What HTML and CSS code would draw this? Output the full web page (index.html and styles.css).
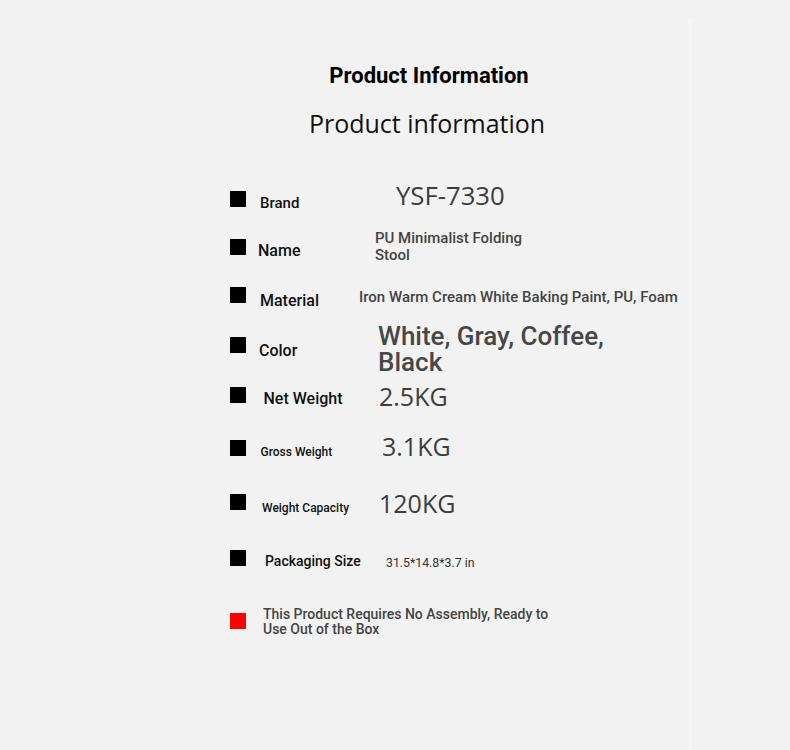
FILE: index.html
```html
<!DOCTYPE html>
<html lang="en">
<head>
<meta charset="utf-8">
<title>Product Information</title>
<link rel="stylesheet" href="styles.css">
</head>
<body>
<main class="page">
  <header class="header">
    <h1 class="title">Product Information</h1>
    <h2 class="subtitle">Product information</h2>
  </header>
  <ul class="specs">
    <li class="row row-brand">
      <span class="sq"></span>
      <span class="label">Brand</span>
      <span class="value big">YSF-7330</span>
    </li>
    <li class="row row-name">
      <span class="sq"></span>
      <span class="label">Name</span>
      <span class="value med">PU Minimalist Folding Stool</span>
    </li>
    <li class="row row-material">
      <span class="sq"></span>
      <span class="label">Material</span>
      <span class="value small">Iron Warm Cream White Baking Paint, PU, Foam</span>
    </li>
    <li class="row row-color">
      <span class="sq"></span>
      <span class="label">Color</span>
      <span class="value huge">White, Gray, Coffee, Black</span>
    </li>
    <li class="row row-net">
      <span class="sq"></span>
      <span class="label">Net Weight</span>
      <span class="value big">2.5KG</span>
    </li>
    <li class="row row-gross">
      <span class="sq"></span>
      <span class="label tiny">Gross Weight</span>
      <span class="value big">3.1KG</span>
    </li>
    <li class="row row-cap">
      <span class="sq"></span>
      <span class="label tiny">Weight Capacity</span>
      <span class="value big">120KG</span>
    </li>
    <li class="row row-pack">
      <span class="sq"></span>
      <span class="label">Packaging Size</span>
      <span class="value mini">31.5*14.8*3.7 in</span>
    </li>
    <li class="row row-note">
      <span class="sq sq-red"></span>
      <span class="note">This Product Requires No Assembly, Ready to Use Out of the Box</span>
    </li>
  </ul>
</main>
</body>
</html>
```

FILE: styles.css
```css
* { box-sizing: border-box; }

html, body {
  margin: 0;
  padding: 0;
  background: #f2f2f2;
}

body {
  font-family: Roboto, "Liberation Sans", Arial, sans-serif;
  color: #111;
}

.page {
  width: 692px;
  height: 732px;
  margin-top: 18px;
  border-right: 4px solid #f6f6f6;
  padding-top: 46px;
  overflow: hidden;
}

.header {
  width: 400px;
  margin-left: 229px;
  text-align: center;
}

.title {
  margin: 0;
  font-size: 22px;
  line-height: 24px;
  font-weight: 700;
  color: #000;
}

.subtitle {
  margin: 20px 0 0;
  padding-right: 4px;
  font-family: "Open Sans", "DejaVu Sans", sans-serif;
  font-size: 25px;
  line-height: 30px;
  font-weight: 400;
  color: #111;
}

.specs {
  list-style: none;
  margin: 53px 0 0;
  padding: 0 0 0 230px;
}

.row {
  display: grid;
  grid-template-columns: 16px 112px 1fr;
  align-items: start;
}

.sq {
  width: 16px;
  height: 16px;
  background: #000;
}

.sq-red { background: #ff0000; }

.label {
  font-size: 16px;
  line-height: 18px;
  font-weight: 500;
  color: #111;
  white-space: nowrap;
}

.label.tiny {
  font-size: 12px;
  line-height: 14px;
}

.value {
  color: #444;
  font-weight: 500;
}

.value.big {
  font-family: "Open Sans", "DejaVu Sans", sans-serif;
  font-weight: 400;
  font-size: 25px;
  line-height: 30px;
  color: #3d3d3d;
}

.row-brand .value.big { font-size: 25.7px; }

.value.med {
  font-size: 15px;
  line-height: 17px;
  max-width: 160px;
}

.value.small {
  font-size: 15px;
  line-height: 17px;
  white-space: nowrap;
}

.value.huge {
  font-size: 26px;
  line-height: 26px;
  max-width: 260px;
  color: #474747;
}

.value.mini {
  font-size: 12.3px;
  line-height: 14px;
  font-weight: 400;
  color: #333;
}

.note {
  grid-column: 2 / 4;
  max-width: 310px;
  padding-left: 17px;
  margin-top: -6px;
  font-size: 14px;
  line-height: 15px;
  font-weight: 500;
  color: #444;
}

/* row geometry */
.row-brand { height: 48px; }
.row-brand .label { font-size: 15px; padding-left: 14px; margin-top: 3px; }
.row-brand .value { margin-left: 38px; margin-top: -10px; }

.row-name { height: 48px; }
.row-name .label { padding-left: 12px; margin-top: 2.5px; }
.row-name .value { margin-left: 17px; margin-top: -8.6px; }

.row-material { height: 50px; }
.row-material .label { padding-left: 14px; margin-top: 4.5px; }
.row-material .value { margin-left: 1px; margin-top: 1.5px; }

.row-color { height: 50px; }
.row-color .label { padding-left: 13px; margin-top: 4.5px; }
.row-color .value { margin-left: 20px; margin-top: -14.4px; }

.row-net { height: 53px; }
.row-net .label { padding-left: 17.5px; margin-top: 2.8px; }
.row-net .value { margin-left: 21px; margin-top: -6px; }

.row-gross { height: 54px; }
.row-gross .label { padding-left: 14.5px; margin-top: 4.9px; }
.row-gross .value { margin-left: 24px; margin-top: -8.7px; }

.row-cap { height: 56px; }
.row-cap .label { padding-left: 16px; margin-top: 6.6px; }
.row-cap .value { margin-left: 21px; margin-top: -6.4px; }

.row-pack { height: 62.5px; }
.row-pack .label { font-size: 14px; line-height: 17px; padding-left: 19px; margin-top: 2.7px; }
.row-pack .value { margin-left: 28px; margin-top: 5.8px; }
```
